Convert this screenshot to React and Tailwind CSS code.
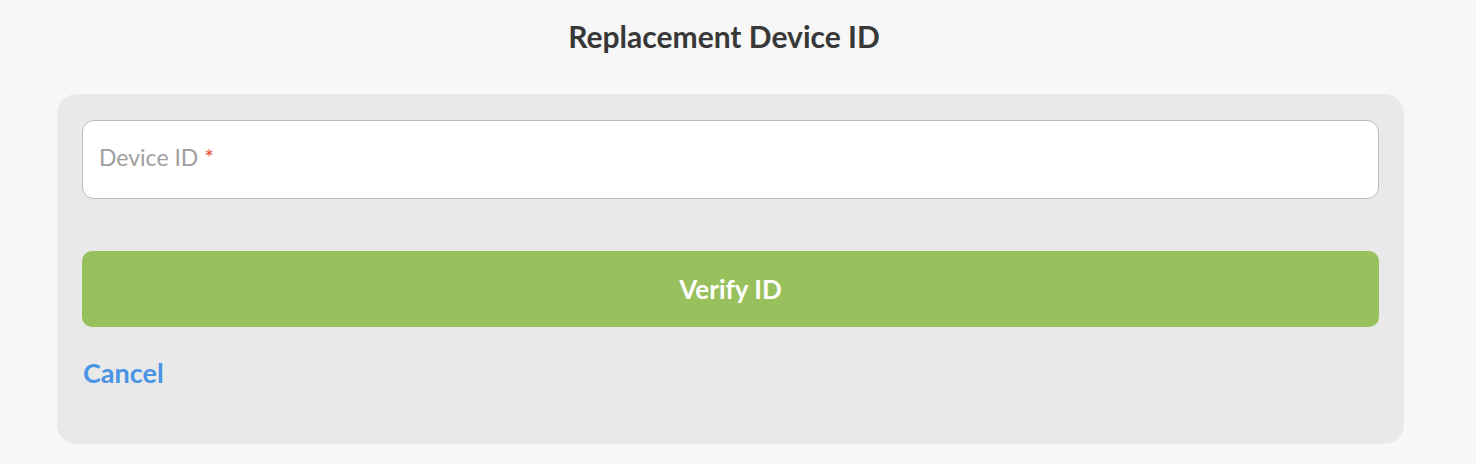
export default function App() {
  return (
    <div
      className="min-h-[464px] bg-[#f7f7f7] pt-[18px]"
      style={{ fontFamily: "Lato, 'Liberation Sans', sans-serif" }}
    >
      <h1 className="text-center text-[30px] font-bold leading-[36px] text-[#383838] pr-[28px]">
        Replacement Device ID
      </h1>

      <div className="ml-[57px] mt-[40px] w-[1347px] rounded-[20px] bg-[#e9e9e9] px-[25px] pt-[26px] pb-[56px]">
        <div className="flex h-[79px] items-center rounded-[12px] border border-[#bdbdbd] bg-white px-[16px] pb-[4px]">
          <span className="text-[23px] text-[#9e9e9e]">
            Device ID <span className="text-[#e5533d]">*</span>
          </span>
        </div>

        <button className="mt-[52px] flex h-[76px] w-full items-center justify-center rounded-[10px] bg-[#98c15e] text-[26px] font-bold text-white">
          Verify ID
        </button>

        <div className="mt-[31px] pl-[1px] text-[27px] font-bold leading-[30px] text-[#4a94e6]">
          Cancel
        </div>
      </div>
    </div>
  );
}
